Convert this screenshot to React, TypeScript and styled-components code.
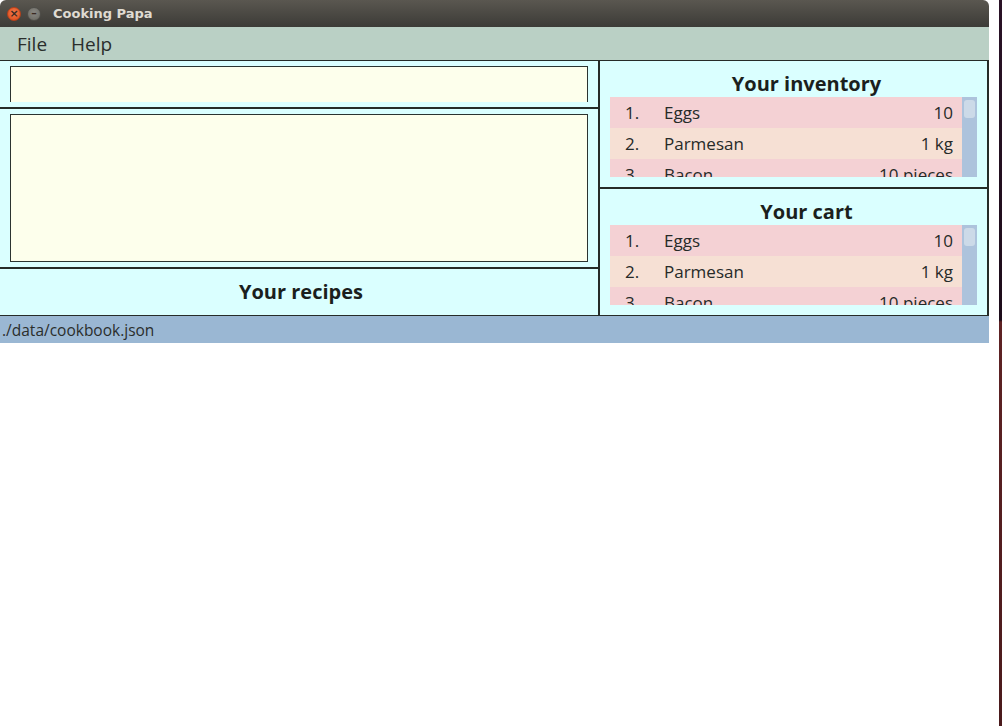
import { createGlobalStyle, styled } from "styled-components";

const GlobalStyle = createGlobalStyle`
  html, body {
    margin: 0;
    padding: 0;
    background: #ffffff;
  }
  body {
    font-family: "Open Sans", "Liberation Sans", sans-serif;
    color: #1f2321;
  }
`;

type Item = { name: string; qty: string };

const inventory: Item[] = [
  { name: "Eggs", qty: "10" },
  { name: "Parmesan", qty: "1 kg" },
  { name: "Bacon", qty: "10 pieces" },
];

const cart: Item[] = [
  { name: "Eggs", qty: "10" },
  { name: "Parmesan", qty: "1 kg" },
  { name: "Bacon", qty: "10 pieces" },
];

function ItemList({ items }: { items: Item[] }) {
  return (
    <StyledList>
      <StyledRows>
        {items.map((item, i) => (
          <StyledRow key={item.name} $odd={i % 2 === 1}>
            <StyledIndex>{i + 1}.</StyledIndex>
            <StyledName>{item.name}</StyledName>
            <StyledQty>{item.qty}</StyledQty>
          </StyledRow>
        ))}
      </StyledRows>
      <StyledScrollTrack>
        <StyledThumb />
      </StyledScrollTrack>
    </StyledList>
  );
}

export default function App() {
  return (
    <>
      <GlobalStyle />
      <StyledScreen>
        <StyledWindow>
          <StyledTitleBar>
            <StyledWinButton $kind="close">×</StyledWinButton>
            <StyledWinButton $kind="min">–</StyledWinButton>
            <StyledTitle>Cooking Papa</StyledTitle>
          </StyledTitleBar>
          <StyledMenuBar>
            <span>File</span>
            <span>Help</span>
          </StyledMenuBar>
          <StyledMain>
            <StyledLeft>
              <StyledCommandPane>
                <StyledCommandBox />
              </StyledCommandPane>
              <StyledResultPane>
                <StyledResultBox />
              </StyledResultPane>
              <StyledRecipesPane>
                <StyledHeading>Your recipes</StyledHeading>
              </StyledRecipesPane>
            </StyledLeft>
            <StyledRight>
              <StyledSidePane>
                <StyledHeading $shift>Your inventory</StyledHeading>
                <ItemList items={inventory} />
              </StyledSidePane>
              <StyledSidePane $last>
                <StyledHeading $shift>Your cart</StyledHeading>
                <ItemList items={cart} />
              </StyledSidePane>
            </StyledRight>
          </StyledMain>
          <StyledStatusBar>./data/cookbook.json</StyledStatusBar>
        </StyledWindow>
        <StyledDesktopEdge />
      </StyledScreen>
    </>
  );
}

const StyledScreen = styled.div`
  display: flex;
  height: 726px;
  width: 1002px;
  overflow: hidden;
`;

const StyledWindow = styled.div`
  width: 989px;
  display: flex;
  flex-direction: column;
  align-self: flex-start;
`;

const StyledDesktopEdge = styled.div`
  margin-left: 10px;
  width: 3px;
  height: 726px;
  background: linear-gradient(
    to bottom,
    #2a1226 0px,
    #1d0c1a 320px,
    #5e2224 322px,
    #4a1a1c 726px
  );
`;

const StyledTitleBar = styled.div`
  height: 27px;
  display: flex;
  align-items: center;
  padding-left: 7px;
  gap: 6px;
  background: linear-gradient(to bottom, #5a5750, #3c3b37);
  border-radius: 6px 6px 0 0;
`;

const StyledWinButton = styled.div<{ $kind: "close" | "min" }>`
  width: 14px;
  height: 14px;
  box-sizing: border-box;
  border-radius: 50%;
  display: flex;
  align-items: center;
  justify-content: center;
  font-family: "DejaVu Sans", sans-serif;
  font-size: 11px;
  line-height: 1;
  font-weight: bold;
  color: #3a2a22;
  background: ${({ $kind }) =>
    $kind === "close"
      ? "radial-gradient(circle at 50% 40%, #f27a4c, #dc4a18)"
      : "radial-gradient(circle at 50% 40%, #8a8984, #68675f)"};
  border: 1px solid ${({ $kind }) => ($kind === "close" ? "#b8401a" : "#4f4e49")};
`;

const StyledTitle = styled.span`
  margin-left: 6px;
  font-family: "DejaVu Sans", sans-serif;
  font-weight: bold;
  font-size: 13px;
  color: #dfdbd2;
`;

const StyledMenuBar = styled.div`
  height: 33px;
  display: flex;
  align-items: center;
  gap: 24px;
  padding-left: 17px;
  background: #bad0c5;
  font-size: 19px;
  color: #2a2e2c;
`;

const StyledMain = styled.div`
  display: flex;
  height: 256px;
  box-sizing: border-box;
  border-top: 1px solid #252b28;
  border-bottom: 1px solid #252b28;
  border-right: 2px solid #252b28;
  background: #daffff;
`;

const StyledLeft = styled.div`
  width: 598px;
  display: flex;
  flex-direction: column;
  border-right: 2px solid #252b28;
`;

const StyledCommandPane = styled.div`
  height: 48px;
  padding: 5px 10px 0 10px;
  box-sizing: border-box;
  border-bottom: 2px solid #252b28;
`;

const StyledCommandBox = styled.div`
  height: 36px;
  background: #fdffec;
  border: 1px solid #2b3431;
  border-bottom: none;
  box-sizing: border-box;
`;

const StyledResultPane = styled.div`
  height: 160px;
  padding: 5px 10px 5px 10px;
  box-sizing: border-box;
  border-bottom: 2px solid #252b28;
`;

const StyledResultBox = styled.div`
  height: 100%;
  background: #fdffec;
  border: 1px solid #2b3431;
  box-sizing: border-box;
`;

const StyledRecipesPane = styled.div`
  flex: 1;
  display: flex;
  align-items: center;
  justify-content: center;
  padding-left: 4px;
`;

const StyledHeading = styled.div<{ $shift?: boolean }>`
  font-weight: 700;
  font-size: 20px;
  line-height: 24px;
  color: #1b1f1d;
  text-align: center;
  padding-left: ${({ $shift }) => ($shift ? "26px" : "0")};
`;

const StyledRight = styled.div`
  flex: 1;
  display: flex;
  flex-direction: column;
`;

const StyledSidePane = styled.div<{ $last?: boolean }>`
  height: ${({ $last }) => ($last ? "126px" : "128px")};
  box-sizing: border-box;
  padding: 11px 10px 0 10px;
  display: flex;
  flex-direction: column;
  gap: 1px;
  border-bottom: ${({ $last }) => ($last ? "none" : "2px solid #252b28")};
`;

const StyledList = styled.div`
  display: flex;
  height: 80px;
  overflow: hidden;
`;

const StyledRows = styled.div`
  flex: 1;
  display: flex;
  flex-direction: column;
`;

const StyledRow = styled.div<{ $odd: boolean }>`
  height: 31px;
  flex-shrink: 0;
  display: flex;
  align-items: center;
  padding: 0 9px 0 15px;
  font-size: 17px;
  color: #262a28;
  background: ${({ $odd }) => ($odd ? "#f6e0d4" : "#f4d1d4")};
`;

const StyledIndex = styled.span`
  width: 39px;
`;

const StyledName = styled.span`
  flex: 1;
`;

const StyledQty = styled.span`
  text-align: right;
`;

const StyledScrollTrack = styled.div`
  width: 15px;
  background: #adc3dc;
  padding: 3px 2px;
  box-sizing: border-box;
`;

const StyledThumb = styled.div`
  height: 18px;
  border-radius: 3px;
  background: #ccdae8;
`;

const StyledStatusBar = styled.div`
  height: 27px;
  display: flex;
  align-items: center;
  padding-left: 2px;
  background: #9ab7d3;
  font-size: 15.5px;
  color: #2a2e2c;
`;
